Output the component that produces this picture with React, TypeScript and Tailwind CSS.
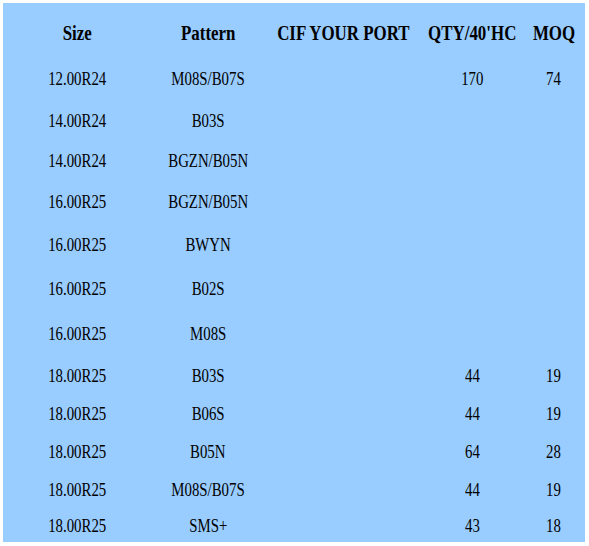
import React from "react";

const rows: { size: string; pattern: string; qty: string; moq: string; h: string }[] = [
  { size: "12.00R24", pattern: "M08S/B07S", qty: "170", moq: "74", h: "h-[44px]" },
  { size: "14.00R24", pattern: "B03S", qty: "", moq: "", h: "h-[41px]" },
  { size: "14.00R24", pattern: "BGZN/B05N", qty: "", moq: "", h: "h-[39px]" },
  { size: "16.00R25", pattern: "BGZN/B05N", qty: "", moq: "", h: "h-[42px]" },
  { size: "16.00R25", pattern: "BWYN", qty: "", moq: "", h: "h-[44px]" },
  { size: "16.00R25", pattern: "B02S", qty: "", moq: "", h: "h-[45px]" },
  { size: "16.00R25", pattern: "M08S", qty: "", moq: "", h: "h-[44px]" },
  { size: "18.00R25", pattern: "B03S", qty: "44", moq: "19", h: "h-[40px]" },
  { size: "18.00R25", pattern: "B06S", qty: "44", moq: "19", h: "h-[37px]" },
  { size: "18.00R25", pattern: "B05N", qty: "64", moq: "28", h: "h-[38px]" },
  { size: "18.00R25", pattern: "M08S/B07S", qty: "44", moq: "19", h: "h-[38px]" },
  { size: "18.00R25", pattern: "SMS+", qty: "43", moq: "18", h: "h-[34px]" },
];

const cols = "grid grid-cols-[148px_114px_150px_114px_49px] items-center text-center";

const Head = ({ children }: { children: React.ReactNode }) => (
  <div>
    <span className="inline-block scale-x-[0.845] whitespace-nowrap">{children}</span>
  </div>
);

const Cell = ({ children }: { children: React.ReactNode }) => (
  <div>
    <span className="inline-block scale-x-[0.78] whitespace-nowrap">{children}</span>
  </div>
);

const App: React.FC = () => {
  return (
    <div className="bg-white p-[3px] pr-[4px] pb-[4px] w-[589px] h-[546px] font-[Liberation_Serif,Times_New_Roman,serif] text-black">
      <div className="bg-[#99ccff] w-[582px] h-[539px]">
        <div className={`${cols} h-[53px] pt-[6px] text-[20px] font-bold leading-none`}>
          <Head>Size</Head>
          <Head>Pattern</Head>
          <Head>CIF YOUR PORT</Head>
          <Head>QTY/40'HC</Head>
          <Head>MOQ</Head>
        </div>
        {rows.map((r, i) => (
          <div key={i} className={`${cols} ${r.h} text-[19px] leading-none`}>
            <Cell>{r.size}</Cell>
            <Cell>{r.pattern}</Cell>
            <Cell>{""}</Cell>
            <Cell>{r.qty}</Cell>
            <Cell>{r.moq}</Cell>
          </div>
        ))}
      </div>
    </div>
  );
};

export default App;
